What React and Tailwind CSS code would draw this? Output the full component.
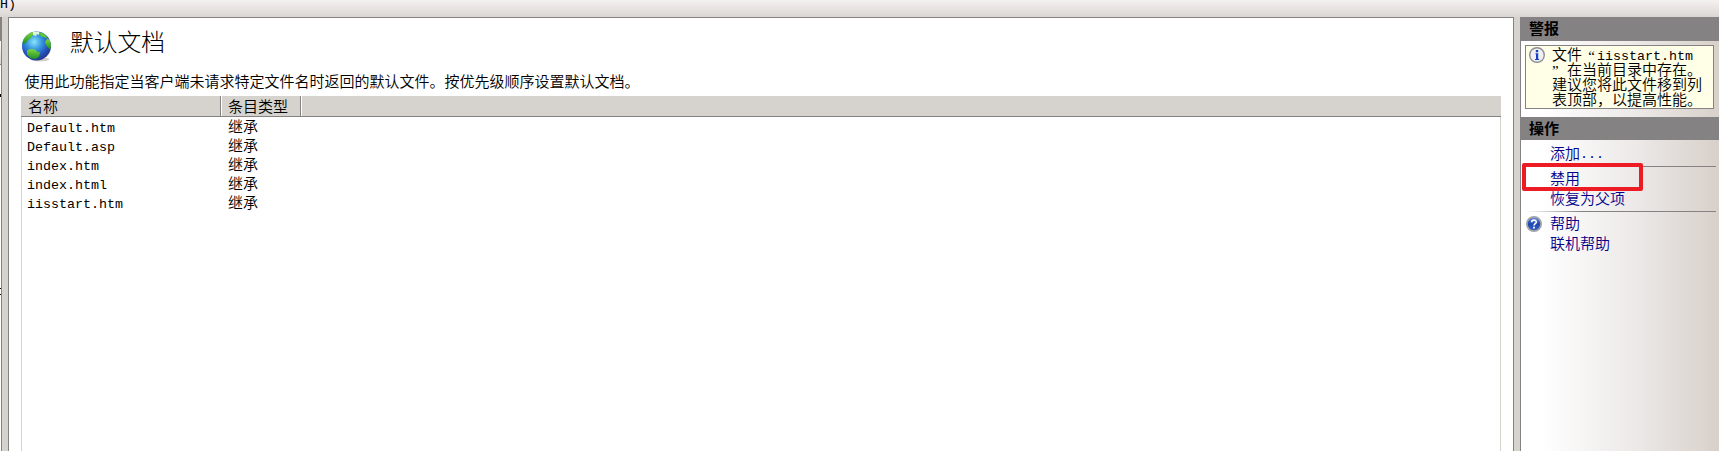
const cjk = "font-['Liberation_Mono','Noto_Sans_CJK_SC',monospace]";

const files = ['Default.htm', 'Default.asp', 'index.htm', 'index.html', 'iisstart.htm'];

function Latin({ children }) {
  return <span className="text-[13.33px]">{children}</span>;
}

function Globe() {
  return (
    <svg width="32" height="32" viewBox="0 0 32 32" className="block">
      <defs>
        <radialGradient id="sea" cx="0.42" cy="0.36" r="0.62">
          <stop offset="0" stopColor="#8be4fb" />
          <stop offset="0.4" stopColor="#3a9be0" />
          <stop offset="0.8" stopColor="#2350bb" />
          <stop offset="1" stopColor="#273c92" />
        </radialGradient>
        <linearGradient id="land" x1="0" y1="0" x2="0" y2="1">
          <stop offset="0" stopColor="#7fd83c" />
          <stop offset="1" stopColor="#1f8f2a" />
        </linearGradient>
        <clipPath id="disc"><circle cx="15.5" cy="15" r="14.5" /></clipPath>
      </defs>
      <ellipse cx="19" cy="28.3" rx="9.5" ry="2" fill="#c4c0be" opacity="0.8" />
      <circle cx="15.5" cy="15" r="14.5" fill="url(#sea)" />
      <g clipPath="url(#disc)">
        <path d="M1 12C2 7 5 3 10 1l4 0-1 3-3 1 0 2-3 2-2 3-3 1z" fill="url(#land)" />
        <path d="M18 1l6 2 3 5-4-2-2 0-3-3z" fill="#58c63b" />
        <path d="M12 1l6 0 0 3-2-1-1 2-3-1z" fill="#dff5e2" />
        <path d="M26 8l5 1v8l-3 1-3-4-1-3z" fill="url(#land)" />
        <path d="M6 19.5l3-1.5 5 .5 2 2 3 1-1 4-3 2.500-5-.5-4-4z" fill="url(#land)" />
      </g>
    </svg>
  );
}

function InfoIcon() {
  return (
    <svg width="16" height="16" viewBox="0 0 16 16" className="block shrink-0">
      <circle cx="8" cy="8" r="7.3" fill="#f0f0f4" stroke="#8d8d92" strokeWidth="1.4" />
      <path d="M6.5 6.300h2.700v5.700h1v1H6v-1h1V7.300H6.500zM6.800 3h2.400v2.200H6.800z" fill="#1440c4" />
    </svg>
  );
}

function HelpIcon() {
  return (
    <svg width="16" height="16" viewBox="0 0 16 16" className="block">
      <defs>
        <linearGradient id="ball" x1="0" y1="0" x2="0" y2="1">
          <stop offset="0" stopColor="#6c93e4" />
          <stop offset="0.5" stopColor="#1e46b0" />
          <stop offset="1" stopColor="#3764cf" />
        </linearGradient>
      </defs>
      <circle cx="8" cy="8" r="7.1" fill="url(#ball)" stroke="#a2a4a8" strokeWidth="1.8" />
      <path d="M5.7 6.2C5.7 3.4 10.4 3.5 10.3 6.1 10.2 7.7 8 7.6 8 9.6" fill="none" stroke="#fff" strokeWidth="1.6" />
      <rect x="7.1" y="10.7" width="1.8" height="1.8" fill="#fff" />
    </svg>
  );
}

function PanelTitle({ children, className }) {
  return (
    <div className={`flex shrink-0 items-center bg-[#858284] pt-[3px] pl-2 text-[15px] leading-none font-bold text-black ${className}`}>
      {children}
    </div>
  );
}

function Rule() {
  return <div className="mr-[3px] ml-1 h-px shrink-0 bg-linear-to-r from-transparent via-[#858284] via-30% to-[#858284]" />;
}

function Action({ children, className }) {
  return (
    <a className={`flex shrink-0 items-center pl-[29px] text-[15px] leading-none text-[#00008b] ${className}`}>
      {children}
    </a>
  );
}

export default function App() {
  return (
    <div className={`flex h-[451px] w-[1719px] flex-col overflow-hidden bg-[#d6d3ce] font-[350] text-black ${cjk}`}>
      <div className="h-[17px] shrink-0 overflow-hidden bg-linear-to-b from-[#f5f1f1] to-[#dbd6d2] text-[13.33px] leading-[10px]">
        H)
      </div>
      <div className="flex min-h-0 flex-1">
        <div className="flex w-0.5 shrink-0 flex-col overflow-hidden border-r border-[#858284] bg-white">
          <div className="h-6 shrink-0 bg-[#858284]" />
          <div className="h-6 shrink-0 border-b border-[#858284] bg-linear-to-b from-white to-[#d6d3ce]" />
          <div className="mt-[29px] h-[3px] shrink-0 bg-black" />
          <div className="mt-[191px] h-[7px] shrink-0 border-y border-black" />
        </div>
        <main className="ml-1.5 flex w-[1506px] shrink-0 flex-col border-x border-t border-[#858284] bg-white">
          <header className="flex h-[49px] shrink-0 items-start pt-[13px] pl-3">
            <Globe />
            <h1 className="ml-[17px] pt-0.5 text-[23.75px] leading-6 font-light">默认文档</h1>
          </header>
          <p className="h-[29px] shrink-0 pt-0.5 pl-[15.5px] text-[15px] leading-[30px]">
            使用此功能指定当客户端未请求特定文件名时返回的默认文件。按优先级顺序设置默认文档。
          </p>
          <section className="mr-3 ml-3 flex flex-1 flex-col border-x border-[#d6d3ce]">
            <div className="-mx-px flex h-[21px] shrink-0 items-stretch border-b border-[#858284] bg-[#d6d3ce] text-[15px] leading-[25px]">
              <div className="flex w-[201px] border-r border-white">
                <div className="flex-1 border-r border-[#858284] pl-[7px]">名称</div>
              </div>
              <div className="flex w-20 border-r border-white">
                <div className="flex-1 border-r border-[#858284] pl-[6px]">条目类型</div>
              </div>
            </div>
            <div className="flex flex-col pt-0.5">
              {files.map((name) => (
                <div key={name} className="grid h-[19px] grid-cols-[200px_1fr] items-center pl-[5px]">
                  <span className="text-[13.33px] leading-[17px]">{name}</span>
                  <span className="pl-px text-[15px] leading-[19px]">继承</span>
                </div>
              ))}
            </div>
          </section>
        </main>
        <aside className="relative ml-1.5 flex flex-1 flex-col border-l border-[#858284] bg-linear-to-r from-white from-10% via-[#ece9e8] via-58% to-[#d8d0ca]">
          <PanelTitle className="h-6">警报</PanelTitle>
          <div className="mt-1 mr-[5px] ml-1 flex h-16 shrink-0 border border-[#858284] bg-[#ffffe7] pt-px pl-[3px]">
            <InfoIcon />
            <div className="ml-[7px] pt-0.5 text-[15px] leading-[15px] whitespace-nowrap">
              <div className="flex h-[15px]">文件<span className="w-[15px] pr-0.5 text-right font-['Liberation_Serif',serif]">“</span><Latin>iisstart.htm</Latin></div>
              <div className="flex h-[15px]"><span className="w-[15px] font-['Liberation_Serif',serif]">”</span>在当前目录中存在。</div>
              <div className="h-[15px]">建议您将此文件移到列</div>
              <div className="h-[15px]">表顶部，以提高性能。</div>
            </div>
          </div>
          <PanelTitle className="mt-2 h-[23px]">操作</PanelTitle>
          <Action className="mt-1 h-[22px]">添加<Latin>...</Latin></Action>
          <Rule />
          <Action className="mt-0.5 h-[21px] pt-px">禁用</Action>
          <Action className="h-[21px]">恢复为父项</Action>
          <Rule />
          <div className="relative mt-0.5 shrink-0">
            <div className="absolute top-[2px] left-[5px]"><HelpIcon /></div>
            <Action className="h-5 pt-0.5">帮助</Action>
          </div>
          <Action className="h-5 pt-0.5">联机帮助</Action>
          <div className="absolute top-[146px] left-[1px] h-7 w-[121px] rounded-xs border-4 border-[#ed1c24]" />
        </aside>
      </div>
    </div>
  );
}
